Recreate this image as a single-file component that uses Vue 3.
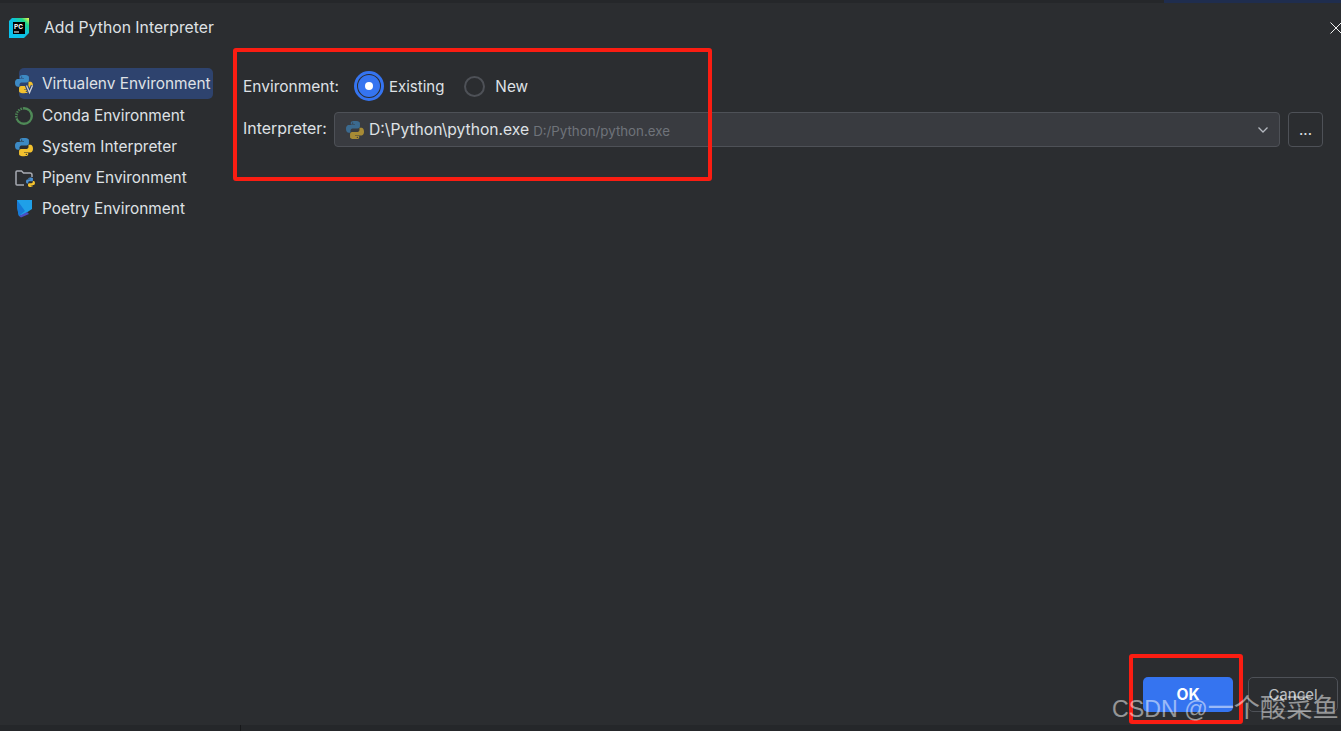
<script setup>
const rows = [
  { label: 'Virtualenv Environment', icon: 'venv', active: true },
  { label: 'Conda Environment', icon: 'conda' },
  { label: 'System Interpreter', icon: 'py' },
  { label: 'Pipenv Environment', icon: 'pipenv' },
  { label: 'Poetry Environment', icon: 'poetry' }
]
const blue = 'M7.9 1C5 1 5.2 2.3 5.2 2.3v1.3H8v.4H4.1S2 3.8 2 6.9s1.8 3 1.8 3H5V8.4s-.1-1.8 1.8-1.8h2.8s1.7 0 1.7-1.7V2.8S11.6 1 7.9 1zM6.4 2a.5.5 0 1 1 0 1 .5.5 0 0 1 0-1z'
</script>

<template>
  <div class="page">
    <div class="top-strip">
      <div class="strip-left"></div>
      <div class="strip-right"></div>
    </div>

    <header class="header">
      <svg class="logo" viewBox="0 0 20 20" width="20" height="20">
        <defs>
          <linearGradient id="pcg" x1="0" y1="1" x2="1" y2="0">
            <stop offset="0" stop-color="#07c3f2" />
            <stop offset="0.55" stop-color="#0dbfe0" />
            <stop offset="0.8" stop-color="#21d789" />
            <stop offset="1" stop-color="#fcf84a" />
          </linearGradient>
        </defs>
        <path d="M3 0H20V15L15 20H0V3Z" fill="url(#pcg)" />
        <rect x="4" y="4" width="12" height="12" fill="#000" />
        <text x="5" y="10.5" class="logo-text">PC</text>
        <rect x="5" y="13.5" width="5" height="1" fill="#fff" />
      </svg>
      <span class="title">Add Python Interpreter</span>
      <svg class="close" viewBox="0 0 12 12" width="12" height="12">
        <path d="M0.5 0.5L11.5 11.5M11.5 0.5L0.5 11.5" stroke="#f0f0f0" stroke-width="1" fill="none" />
      </svg>
    </header>

    <div class="body">
      <aside class="sidebar">
        <div v-for="r in rows" :key="r.label" class="row" :class="{ active: r.active }">
          <svg class="row-icon" viewBox="0 0 18 18" width="18" height="18">
            <template v-if="r.icon === 'py' || r.icon === 'venv'">
              <g transform="translate(-3 -1.2) scale(1.5 1.3)">
                <path :d="blue" fill="#3d8ac4" fill-rule="evenodd" />
                <path :d="blue" fill="#f2c12e" fill-rule="evenodd" transform="rotate(180 8 8)" />
              </g>
              <template v-if="r.icon === 'venv'">
                <path d="M11.5 10.5L14.5 17.5L17.5 10.5" fill="none" stroke="#2e436e" stroke-width="3.4" />
                <path d="M11.5 10.5L14.5 17.5L17.5 10.5" fill="none" stroke="#ced0d6" stroke-width="1.3" />
              </template>
            </template>
            <template v-else-if="r.icon === 'conda'">
              <circle cx="9" cy="9" r="7.8" fill="none" stroke="#4f8a57" stroke-width="2.4" />
              <path d="M1.5 11.5A7.8 7.8 0 0 1 9 1.2" fill="none" stroke="#2b2d30" stroke-width="2.6" stroke-dasharray="1.1 1.4" />
            </template>
            <template v-else-if="r.icon === 'pipenv'">
              <path d="M9 16H2Q1 16 1 15V3Q1 2 2 2H6.5L8.5 4H15Q17 4 17 6V8" fill="none" stroke="#a8abb2" stroke-width="1.5" />
              <g transform="translate(9.5 7.8) scale(0.75 0.68)">
                <path :d="blue" fill="#4a8fd0" fill-rule="evenodd" />
                <path :d="blue" fill="#f2c12e" fill-rule="evenodd" transform="rotate(180 8 8)" />
              </g>
            </template>
            <template v-else>
              <path d="M2 0H17V9L8 15L4 16Q2 10 2 0Z" fill="#1fa0e8" />
              <path d="M2 0Q2 10 4 16L10 11Z" fill="#1679d6" />
              <path d="M4 16L12 12L14 14L6 17.5Z" fill="#4b4fc4" />
            </template>
          </svg>
          <span>{{ r.label }}</span>
        </div>
      </aside>

      <main class="content">
        <div class="form">
          <div class="env-row">
            <span class="env-label">Environment:</span>
            <span class="radio-on"><span class="radio-dot"></span></span>
            <span class="existing">Existing</span>
            <span class="radio-off"></span>
            <span class="new">New</span>
          </div>
          <div class="int-row">
            <span class="int-label">Interpreter:</span>
            <div class="combo">
              <svg viewBox="0 0 18 18" width="18" height="18">
                <g transform="translate(-3 -1.2) scale(1.5 1.3)" opacity="0.6">
                  <path :d="blue" fill="#3d8ac4" fill-rule="evenodd" />
                  <path :d="blue" fill="#f2c12e" fill-rule="evenodd" transform="rotate(180 8 8)" />
                </g>
              </svg>
              <span class="path">D:\Python\python.exe</span>
              <span class="hint">D:/Python/python.exe</span>
              <svg class="chevron" viewBox="0 0 10 6" width="10" height="6">
                <path d="M0.5 0.5L5 5L9.5 0.5" fill="none" stroke="#b4b8bf" stroke-width="1.3" />
              </svg>
            </div>
            <div class="browse">...</div>
          </div>
        </div>
        <footer class="footer">
          <button class="btn ok">OK</button>
          <button class="btn cancel"><span class="cancel-text">Cancel</span></button>
        </footer>
      </main>
    </div>

    <div class="bottom-strip">
      <div class="bottom-cell"></div>
      <div class="bottom-cell wide"></div>
    </div>

    <div class="mark mark-form"></div>
    <div class="mark mark-ok"></div>
    <div class="watermark">CSDN @<span class="cjk">一个酸菜鱼</span></div>
  </div>
</template>

<style>
html, body { margin: 0; background: #2b2d30; overflow: hidden; }
</style>

<style scoped>
.page {
  position: relative;
  width: 1341px;
  height: 731px;
  overflow: hidden;
  display: flex;
  flex-direction: column;
  background: #2b2d30;
  color: #dfe1e5;
  font: 15px/20px Inter, "Noto Sans", sans-serif;
}
.top-strip { height: 3px; display: flex; flex: none; }
.strip-left { flex: 1; background: #25272a; }
.strip-right { width: 177px; background: #1f2d4e; }
.header {
  height: 50px;
  flex: none;
  display: flex;
  align-items: center;
  padding-left: 9px;
  position: relative;
}
.logo { flex: none; }
.logo-text { font: 700 6.5px Inter, sans-serif; fill: #fff; }
.title { margin-left: 15px; font-size: 15.75px; }
.close { position: absolute; right: -1px; top: 19px; }
.body { flex: 1; display: flex; min-height: 0; }
.sidebar { width: 233px; flex: none; padding-top: 15px; font-size: 15.4px; }
.row {
  width: 194px;
  height: 31px;
  margin-left: 19px;
  display: flex;
  align-items: center;
  gap: 9px;
  border-radius: 5px;
  white-space: nowrap;
}
.row.active { background: #2e436e; margin-bottom: 1px; }
.row-icon { margin-left: -4px; flex: none; overflow: visible; }
.content { flex: 1; display: flex; flex-direction: column; min-width: 0; }
.form { flex: 1; padding: 18px 18px 0 10px; }
.env-row { display: flex; align-items: center; height: 30px; }
.env-label { width: 111px; font-size: 15.5px; padding-top: 1px; }
.radio-on {
  width: 30px;
  height: 30px;
  box-sizing: border-box;
  border: 3px solid #3574f0;
  border-radius: 50%;
  padding: 1px;
  display: flex;
  flex: none;
}
.radio-dot {
  flex: 1;
  border-radius: 50%;
  background: #3574f0;
  display: flex;
  align-items: center;
  justify-content: center;
}
.radio-dot::after {
  content: "";
  width: 8px;
  height: 8px;
  border-radius: 50%;
  background: #fff;
}
.existing { margin-left: 5px; padding-top: 1px; }
.radio-off {
  width: 21px;
  height: 21px;
  box-sizing: border-box;
  border: 2px solid #4e5157;
  border-radius: 50%;
  margin-left: 20px;
  flex: none;
}
.new { margin-left: 10px; padding-top: 1px; font-size: 15.3px; }
.int-row { display: flex; margin-top: 11px; gap: 8px; }
.int-label { width: 83px; margin-top: 7px; font-size: 15.9px; white-space: nowrap; }
.combo {
  flex: 1;
  height: 35px;
  box-sizing: border-box;
  border: 1px solid #4e5157;
  border-radius: 4px;
  background: #393b40;
  display: flex;
  align-items: center;
  padding: 0 10px 0 11px;
  gap: 5px;
}
.path { font-size: 15.65px; padding-top: 1px; }
.hint { color: #6f737a; font-size: 13.3px; padding-top: 2px; margin-left: -1px; }
.chevron { margin-left: auto; margin-right: 1px; }
.browse {
  width: 35px;
  height: 35px;
  box-sizing: border-box;
  border: 1px solid #4e5157;
  border-radius: 4px;
  display: flex;
  align-items: center;
  justify-content: center;
}
.footer {
  display: flex;
  justify-content: flex-end;
  gap: 15px;
  padding: 0 3px 13px 0;
}
.btn {
  width: 90px;
  height: 35px;
  box-sizing: border-box;
  border-radius: 5px;
  font: inherit;
  color: #dfe1e5;
  padding: 0;
}
.ok { background: #3574f0; border: 0; color: #fff; font-weight: 700; font-size: 15.5px; }
.cancel { background: transparent; border: 1px solid #4e5157; }
.cancel-text { display: block; padding-top: 1px; opacity: 0.8; }
.bottom-strip { height: 6px; flex: none; display: flex; background: #25272a; }
.bottom-cell { width: 240px; border-right: 1px solid #17181a; }
.bottom-cell.wide { flex: 1; border: 0; }
.mark {
  position: absolute;
  box-sizing: border-box;
  border: 4px solid #fb1d12;
  border-radius: 3px;
}
.mark-form { left: 233px; top: 48px; width: 479px; height: 133px; }
.mark-ok { left: 1129px; top: 654px; width: 114px; height: 70px; }
.watermark {
  position: absolute;
  left: 1112px;
  top: 692px;
  font: 23.2px/32px "Liberation Sans", "Noto Sans CJK SC", sans-serif;
  color: rgba(255, 255, 255, 0.5);
  white-space: nowrap;
}
.cjk { font-size: 26.2px; }
</style>
